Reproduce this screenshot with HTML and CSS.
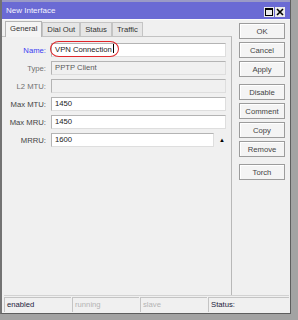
FILE: index.html
```html
<!DOCTYPE html>
<html lang="en">
<head>
    <meta charset="UTF-8">
    <meta name="viewport" content="width=device-width, initial-scale=1.0">
    <title>New Interface</title>
    <link rel="stylesheet" href="styles.css">
</head>
<body>

    <div class="window">
        <!-- Title bar -->
        <div class="titlebar">
            <span class="title">New Interface</span>
            <div class="title-btns">
                <span class="tbtn">
                    <svg width="8" height="8" viewBox="0 0 8 8"><rect x="0.5" y="0.5" width="7" height="7" fill="none" stroke="#000"/><line x1="0" y1="1.5" x2="8" y2="1.5" stroke="#000"/></svg>
                </span>
                <span class="tbtn">
                    <svg width="8" height="8" viewBox="0 0 8 8"><path d="M1 1 L7 7 M7 1 L1 7" stroke="#000" stroke-width="1.6"/></svg>
                </span>
            </div>
        </div>

        <div class="content">
            <div class="main">
                <div class="tabs">
                    <div class="tab active">General</div>
                    <div class="tab">Dial Out</div>
                    <div class="tab">Status</div>
                    <div class="tab">Traffic</div>
                </div>

                <div class="panel">
                    <div class="row">
                        <label class="lbl lbl-blue">Name:</label>
                        <div class="field-wrap">
                            <div class="field">VPN Connection<span class="caret"></span></div>
                            <div class="mark"></div>
                        </div>
                    </div>
                    <div class="row">
                        <label class="lbl lbl-gray">Type:</label>
                        <div class="field disabled">PPTP Client</div>
                    </div>
                    <div class="row">
                        <label class="lbl lbl-gray">L2 MTU:</label>
                        <div class="field disabled"></div>
                    </div>
                    <div class="row">
                        <label class="lbl">Max MTU:</label>
                        <div class="field">1450</div>
                    </div>
                    <div class="row">
                        <label class="lbl">Max MRU:</label>
                        <div class="field">1450</div>
                    </div>
                    <div class="row">
                        <label class="lbl">MRRU:</label>
                        <div class="field-line">
                            <div class="field short">1600</div>
                            <span class="arrow">&#9650;</span>
                        </div>
                    </div>
                </div>
            </div>

            <!-- Side buttons -->
            <div class="buttons">
                <button>OK</button>
                <button>Cancel</button>
                <button>Apply</button>
                <button class="group">Disable</button>
                <button>Comment</button>
                <button>Copy</button>
                <button>Remove</button>
                <button class="group">Torch</button>
            </div>
        </div>

        <!-- Status bar -->
        <div class="statusbar">
            <div class="cell">enabled</div>
            <div class="cell dim">running</div>
            <div class="cell dim">slave</div>
            <div class="cell wide">Status:</div>
        </div>
    </div>

</body>
</html>
```

FILE: styles.css
```css
body {
    margin: 0;
    padding: 0;
    background: #a3a3a3;
    font-family: "Liberation Sans", Arial, sans-serif;
    font-size: 7.7px;
    color: #222;
}
.window {
    width: 288px;
    height: 313px;
    background: #f0f0f0;
    border-left: 2px solid #737373;
    border-right: 1px solid #5e5e5e;
    border-bottom: 1px solid #5e5e5e;
    display: flex;
    flex-direction: column;
}
.titlebar {
    height: 17px;
    border-top: 2px solid #9a9ac6;
    background: #6a6ad4;
    display: flex;
    align-items: center;
    justify-content: space-between;
    padding: 0 5px 0 4px;
}
.title {
    color: #f4f4ff;
    font-size: 8px;
}
.title-btns {
    display: flex;
    gap: 1px;
    margin-top: 2px;
}
.tbtn {
    width: 10px;
    height: 10px;
    background: #eaeaea;
    display: flex;
    align-items: center;
    justify-content: center;
}
.content {
    flex: 1;
    display: flex;
    border-top: 1px solid #fafafa;
}
.main {
    width: 230px;
    display: flex;
    flex-direction: column;
}
.tabs {
    height: 16px;
    display: flex;
    align-items: flex-end;
    padding-left: 3px;
}
.tab {
    height: 13px;
    line-height: 13px;
    padding: 0 4px;
    background: #e6e6e6;
    border: 1px solid #c4c4c4;
    border-bottom: none;
    color: #333;
}
.tab.active {
    height: 15px;
    line-height: 14px;
    background: #f4f4f4;
    border-color: #b4b4b4;
    margin-bottom: -1px;
    position: relative;
    z-index: 1;
}
.panel {
    flex: 1;
    border-top: 1px solid #c2c2c2;
    border-right: 1px solid #b8b8b8;
    padding: 6px 5px 0 0;
}
.row {
    display: grid;
    grid-template-columns: 44px 1fr;
    column-gap: 5px;
    align-items: center;
    height: 14px;
    margin-bottom: 4px;
}
.lbl {
    text-align: right;
    color: #444;
}
.lbl-blue {
    color: #3b3bf2;
}
.lbl-gray {
    color: #707070;
}
.field-wrap {
    position: relative;
}
.field {
    height: 12px;
    line-height: 12px;
    padding: 0 3px;
    background: #fff;
    border: 1px solid #b4b4b4;
    border-right-color: #dedede;
    border-bottom-color: #dedede;
    color: #222;
}
.field.disabled {
    background: #f0f0f0;
    color: #5a5a5a;
}
.caret {
    display: inline-block;
    width: 1px;
    height: 9px;
    background: #000;
    margin-left: 1px;
    vertical-align: -1px;
}
/* red annotation drawn over the name field */
.mark {
    position: absolute;
    left: -1px;
    top: -2px;
    width: 67px;
    height: 14px;
    border: 1.5px solid #e0262a;
    border-radius: 9px / 8px;
}
.field-line {
    display: flex;
    align-items: center;
}
.field.short {
    width: 155px;
}
.arrow {
    font-size: 6px;
    margin-left: 5px;
    color: #000;
}
.buttons {
    flex: 1;
    display: flex;
    flex-direction: column;
    padding: 3px 0 0 7px;
}
button {
    width: 46px;
    height: 16px;
    margin: 0 0 3px 0;
    padding: 0;
    font-family: "Liberation Sans", Arial, sans-serif;
    font-size: 7.7px;
    color: #444;
    background: #f4f4f4;
    border: 1px solid #9c9c9c;
    box-shadow: inset 1px 1px 0 #fff;
}
button.group {
    margin-top: 4px;
}
.statusbar {
    height: 16px;
    margin: 0 1px 0 2px;
    border-top: 1px solid #d2d2d2;
    padding-top: 1px;
    display: flex;
    gap: 1px;
}
.cell {
    width: 64px;
    height: 14px;
    line-height: 14px;
    padding-left: 2px;
    border-top: 1px solid #c4c4c4;
    border-left: 1px solid #c4c4c4;
    color: #1c1c3c;
}
.cell.dim {
    color: #b4b4b4;
}
.cell.wide {
    flex: 1;
    width: auto;
}
```
